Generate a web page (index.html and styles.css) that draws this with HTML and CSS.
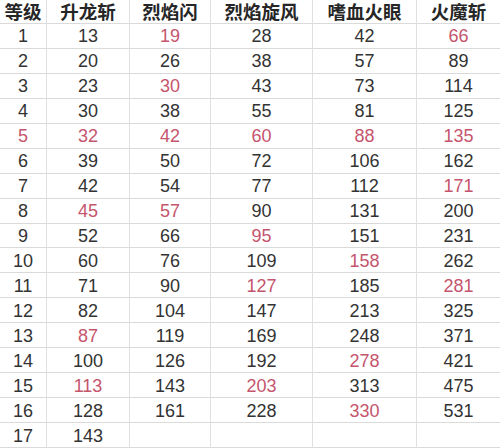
FILE: index.html
```html
<!DOCTYPE html>
<html lang="zh">
<head>
<meta charset="utf-8">
<link rel="stylesheet" href="styles.css">
</head>
<body>
<div class="grid" id="grid">
<div class="h">等级</div><div class="h">升龙斩</div><div class="h">烈焰闪</div><div class="h">烈焰旋风</div><div class="h">嗜血火眼</div><div class="h">火魔斩</div>
<div>1</div><div>13</div><div class="r">19</div><div>28</div><div>42</div><div class="r">66</div>
<div>2</div><div>20</div><div>26</div><div>38</div><div>57</div><div>89</div>
<div>3</div><div>23</div><div class="r">30</div><div>43</div><div>73</div><div>114</div>
<div>4</div><div>30</div><div>38</div><div>55</div><div>81</div><div>125</div>
<div class="r">5</div><div class="r">32</div><div class="r">42</div><div class="r">60</div><div class="r">88</div><div class="r">135</div>
<div>6</div><div>39</div><div>50</div><div>72</div><div>106</div><div>162</div>
<div>7</div><div>42</div><div>54</div><div>77</div><div>112</div><div class="r">171</div>
<div>8</div><div class="r">45</div><div class="r">57</div><div>90</div><div>131</div><div>200</div>
<div>9</div><div>52</div><div>66</div><div class="r">95</div><div>151</div><div>231</div>
<div>10</div><div>60</div><div>76</div><div>109</div><div class="r">158</div><div>262</div>
<div>11</div><div>71</div><div>90</div><div class="r">127</div><div>185</div><div class="r">281</div>
<div>12</div><div>82</div><div>104</div><div>147</div><div>213</div><div>325</div>
<div>13</div><div class="r">87</div><div>119</div><div>169</div><div>248</div><div>371</div>
<div>14</div><div>100</div><div>126</div><div>192</div><div class="r">278</div><div>421</div>
<div>15</div><div class="r">113</div><div>143</div><div class="r">203</div><div>313</div><div>475</div>
<div>16</div><div>128</div><div>161</div><div>228</div><div class="r">330</div><div>531</div>
<div>17</div><div>143</div><div></div><div></div><div></div><div></div>
</div>
</body>
</html>
```
FILE: styles.css
```css
html, body {
  margin: 0;
  padding: 0;
  background: #ffffff;
}
.grid {
  width: 500px;
  height: 448px;
  display: grid;
  grid-template-columns: 47px 83px 81px 102px 104px 83px;
  grid-template-rows: 24px repeat(17, 1fr);
  font-family: "Liberation Sans", Arial, "Noto Sans CJK SC", sans-serif;
  font-size: 18px;
  color: #333333;
}
.grid > div {
  display: flex;
  align-items: center;
  justify-content: center;
  border-right: 1px solid #e0e0e0;
  border-bottom: 1px solid #dadada;
  box-sizing: border-box;
  line-height: 20px;
  padding-top: 1px;
}
.grid > div:nth-child(6n) {
  border-right: none;
}
.grid > .h {
  font-family: "Noto Sans CJK SC", sans-serif;
  font-size: 18.5px;
  font-weight: 700;
  color: #262626;
  line-height: 22px;
  padding-top: 0;
  padding-bottom: 1px;
}
.grid > .r {
  color: #c5556d;
}
```
